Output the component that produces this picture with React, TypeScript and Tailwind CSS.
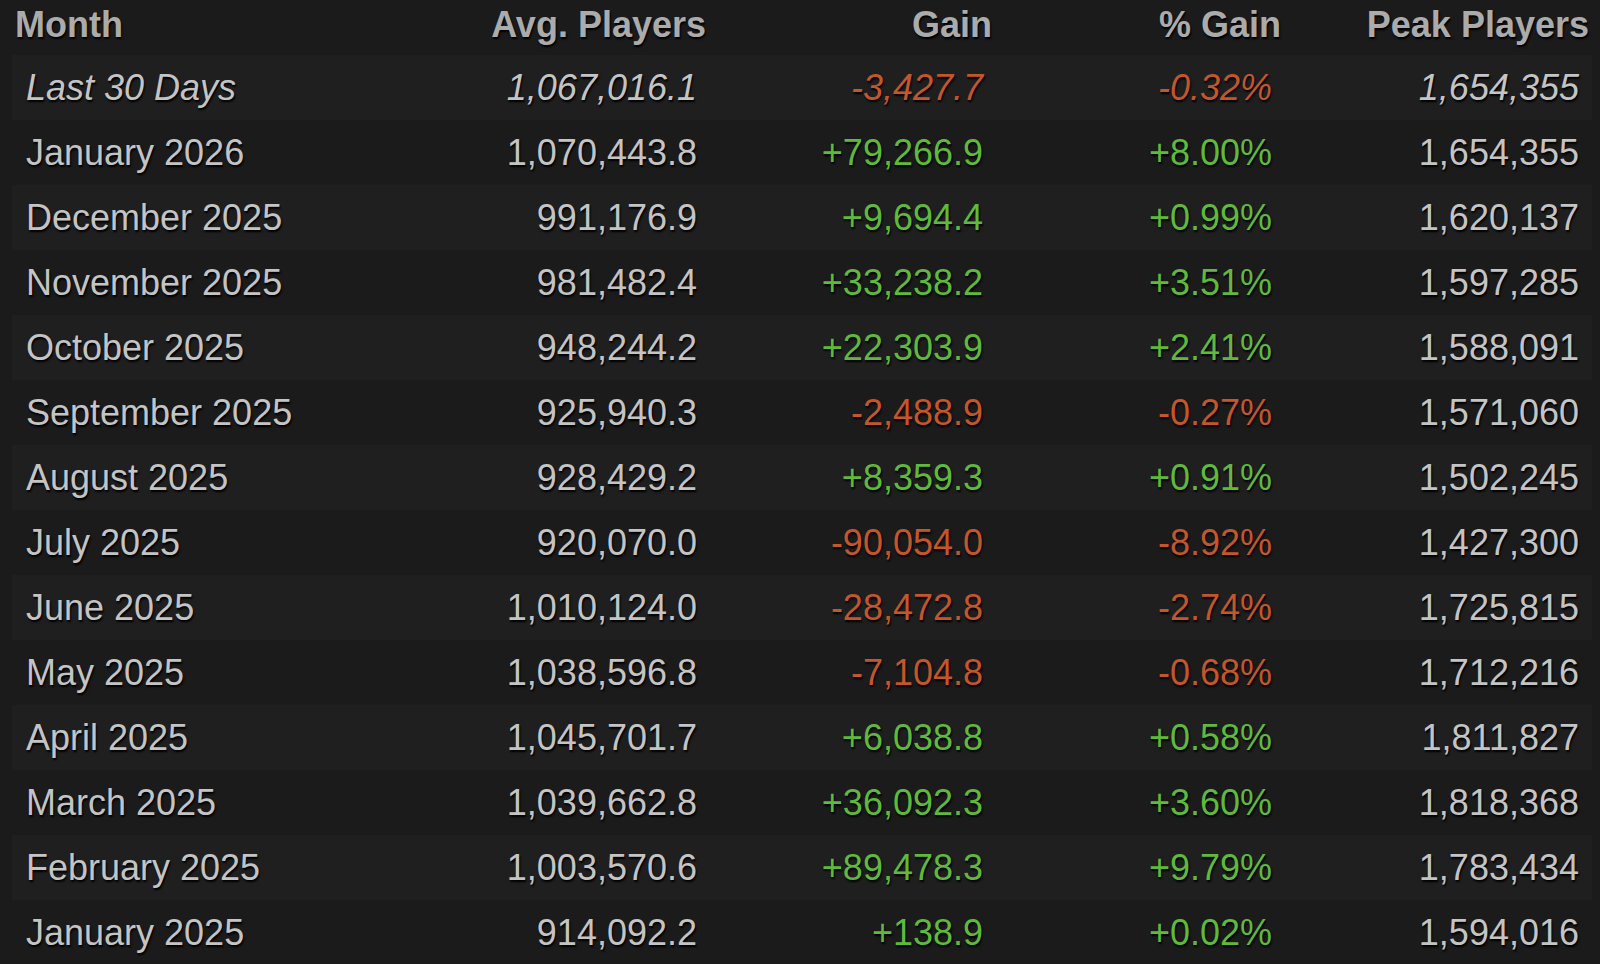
import React from 'react';

type Row = {
  month: string;
  avg: string;
  gain: string;
  pct: string;
  peak: string;
  italic?: boolean;
};

const ROWS: Row[] = [
  { month: 'Last 30 Days', avg: '1,067,016.1', gain: '-3,427.7', pct: '-0.32%', peak: '1,654,355', italic: true },
  { month: 'January 2026', avg: '1,070,443.8', gain: '+79,266.9', pct: '+8.00%', peak: '1,654,355' },
  { month: 'December 2025', avg: '991,176.9', gain: '+9,694.4', pct: '+0.99%', peak: '1,620,137' },
  { month: 'November 2025', avg: '981,482.4', gain: '+33,238.2', pct: '+3.51%', peak: '1,597,285' },
  { month: 'October 2025', avg: '948,244.2', gain: '+22,303.9', pct: '+2.41%', peak: '1,588,091' },
  { month: 'September 2025', avg: '925,940.3', gain: '-2,488.9', pct: '-0.27%', peak: '1,571,060' },
  { month: 'August 2025', avg: '928,429.2', gain: '+8,359.3', pct: '+0.91%', peak: '1,502,245' },
  { month: 'July 2025', avg: '920,070.0', gain: '-90,054.0', pct: '-8.92%', peak: '1,427,300' },
  { month: 'June 2025', avg: '1,010,124.0', gain: '-28,472.8', pct: '-2.74%', peak: '1,725,815' },
  { month: 'May 2025', avg: '1,038,596.8', gain: '-7,104.8', pct: '-0.68%', peak: '1,712,216' },
  { month: 'April 2025', avg: '1,045,701.7', gain: '+6,038.8', pct: '+0.58%', peak: '1,811,827' },
  { month: 'March 2025', avg: '1,039,662.8', gain: '+36,092.3', pct: '+3.60%', peak: '1,818,368' },
  { month: 'February 2025', avg: '1,003,570.6', gain: '+89,478.3', pct: '+9.79%', peak: '1,783,434' },
  { month: 'January 2025', avg: '914,092.2', gain: '+138.9', pct: '+0.02%', peak: '1,594,016' },
];

const GRID = 'grid grid-cols-[388px_310px_286px_289px_307px]';

export default function App() {
  return (
    <div className="h-[964px] w-[1600px] overflow-hidden bg-[#1b1b1b] font-['Liberation_Sans',Arial,sans-serif] text-[36px] leading-none [text-shadow:1px_2px_2px_#000]">
      <div className="ml-3 w-[1580px]">
        <div className={`${GRID} h-[55px] items-start pt-[7px] font-bold text-[#ababab]`}>
          <div className="pl-[3px]">Month</div>
          <div className="pr-[4px] text-right">Avg. Players</div>
          <div className="pr-[4px] text-right">Gain</div>
          <div className="pr-[4px] text-right">% Gain</div>
          <div className="pr-[3px] text-right">Peak Players</div>
        </div>

        {ROWS.map((row, i) => {
          const up = row.gain.startsWith('+');
          const tone = up ? 'text-[#5fba3b]' : 'text-[#c4562b]';
          return (
            <div
              key={row.month}
              className={`${GRID} h-[65px] items-center text-[#c4c4c4] ${i % 2 === 0 ? 'bg-[#1f1f1f]' : 'bg-[#1b1b1b]'} ${row.italic ? 'italic' : ''}`}
            >
              <div className="pl-[14px]">{row.month}</div>
              <div className="pr-[13px] text-right">{row.avg}</div>
              <div className={`pr-[13px] text-right ${tone}`}>{row.gain}</div>
              <div className={`pr-[13px] text-right ${tone}`}>{row.pct}</div>
              <div className="pr-[13px] text-right">{row.peak}</div>
            </div>
          );
        })}
      </div>
    </div>
  );
}
